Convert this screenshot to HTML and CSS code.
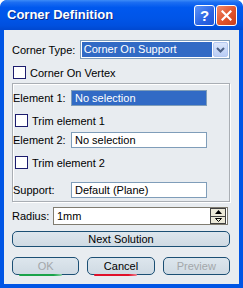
FILE: index.html
```html
<!DOCTYPE html>
<html lang="en">
<head>
  <meta charset="UTF-8">
  <title>Corner Definition</title>
  <link rel="stylesheet" href="styles.css">
</head>
<body>

<!-- JANELA -->
<div class="window">
  <div class="titlebar">
    <span class="title">Corner Definition</span>
    <span class="tbtn help">?</span>
    <span class="tbtn close">
      <svg width="11" height="11" viewBox="0 0 11 11"><path d="M1.5 1.5 L9.5 9.5 M9.5 1.5 L1.5 9.5" stroke="#fff" stroke-width="2.2" stroke-linecap="square"/></svg>
    </span>
  </div>

  <div class="dialog">
    <div class="row type-row">
      <span class="lbl">Corner Type:</span>
      <div class="combo">
        <span class="combo-text">Corner On Support</span>
        <span class="combo-btn">
          <svg width="9" height="6" viewBox="0 0 9 6"><path d="M1 1 L4.5 4.5 L8 1" fill="none" stroke="#4d6185" stroke-width="2"/></svg>
        </span>
      </div>
    </div>

    <div class="check vertex"><span class="box"></span>Corner On Vertex</div>

    <!-- GRUPO -->
    <div class="group">
      <div class="row el-row first">
        <span class="lbl">Element 1:</span>
        <span class="field selected">No selection</span>
      </div>
      <div class="check trim"><span class="box"></span>Trim element 1</div>
      <div class="row el-row">
        <span class="lbl">Element 2:</span>
        <span class="field">No selection</span>
      </div>
      <div class="check trim"><span class="box"></span>Trim element 2</div>
      <div class="row el-row support">
        <span class="lbl">Support:</span>
        <span class="field">Default (Plane)</span>
      </div>
    </div>

    <div class="row radius-row">
      <span class="lbl">Radius:</span>
      <div class="field spin-field">
        <span class="spin-text">1mm</span>
        <span class="spinner">
          <span class="spin up"><svg width="7" height="4" viewBox="0 0 7 4"><path d="M0 4 L3.5 0 L7 4 Z" fill="#000"/></svg></span>
          <span class="spin down"><svg width="7" height="4" viewBox="0 0 7 4"><path d="M0.5 0.5 L3.5 3.5 L6.5 0.5 Z" fill="none" stroke="#000" stroke-width="1"/></svg></span>
        </span>
      </div>
    </div>

    <button class="btn wide">Next Solution</button>

    <div class="actions">
      <button class="btn ok" disabled>OK<span class="bar green"></span></button>
      <button class="btn cancel">Cancel<span class="bar red"></span></button>
      <button class="btn" disabled>Preview</button>
    </div>
  </div>
</div>

</body>
</html>
```

FILE: styles.css
```css
body {
  margin: 0;
  font-family: "Liberation Sans", Arial, sans-serif;
  font-size: 11px;
  color: #000;
  background: #fff;
}

.window {
  width: 243px;
  height: 288px;
  box-sizing: border-box;
  background: #0055e5;
  border-radius: 7px 7px 0 0;
  padding: 0 4px 4px 4px;
  display: flex;
  flex-direction: column;
  overflow: hidden;
}

.titlebar {
  height: 30px;
  margin: 0 -4px;
  padding: 0 6px 0 7px;
  display: flex;
  align-items: center;
  gap: 1px;
  border-radius: 7px 7px 0 0;
  background: linear-gradient(#3d8cf7 0%, #1c6ef2 8%, #0058ee 25%, #0055e8 60%, #0050df 85%, #0048d0 100%);
}

.title {
  flex: 1;
  color: #fff;
  font-weight: bold;
  font-size: 13px;
  text-shadow: 1px 1px 0 #0a2a8a;
  padding-bottom: 1px;
}

.tbtn {
  width: 19px;
  height: 19px;
  border: 1px solid #fff;
  border-radius: 3px;
  display: flex;
  align-items: center;
  justify-content: center;
  color: #fff;
}

.help {
  background: linear-gradient(135deg, #5e94f8, #2a63e3 60%, #1d55d8);
  font-weight: bold;
  font-size: 15px;
}

.close {
  background: linear-gradient(135deg, #f08a6a, #e0532c 55%, #c9401c);
}

.dialog {
  flex: 1;
  background: #e8ecf0;
  padding: 10px 9px 0 8px;
  display: flex;
  flex-direction: column;
}

.row {
  display: flex;
  align-items: center;
}

.type-row {
  height: 19px;
}

.type-row .lbl {
  width: 68px;
}

.combo {
  width: 147px;
  height: 17px;
  border: 1px solid #7f9db9;
  background: #fff;
  display: flex;
  align-items: center;
  padding: 0 1px 0 1px;
}

.combo-text {
  flex: 1;
  height: 15px;
  line-height: 15px;
  background: #316ac5;
  color: #fff;
  padding-left: 2px;
}

.combo-btn {
  width: 15px;
  height: 15px;
  margin-left: 1px;
  background: linear-gradient(#dbe6fb, #b9cdf5);
  border: 1px solid #b4c8f0;
  box-sizing: border-box;
  border-radius: 2px;
  display: flex;
  align-items: center;
  justify-content: center;
}

.check {
  display: flex;
  align-items: center;
  gap: 4px;
  height: 13px;
}

.box {
  width: 11px;
  height: 11px;
  border: 1px solid #1c1c6e;
  background: #fff;
}

.vertex {
  margin: 7px 0 0 1px;
}

.group {
  margin-top: 4px;
  height: 119px;
  box-sizing: border-box;
  border: 1px solid #a9aeb4;
  box-shadow: inset 1px 1px 0 #fff, 1px 1px 0 #fff;
  display: flex;
  flex-direction: column;
}

.el-row {
  height: 16px;
}

.el-row.first {
  margin-top: 6px;
}

.el-row .lbl {
  width: 58px;
}

.field {
  width: 131px;
  height: 14px;
  line-height: 14px;
  border: 1px solid #7f9db9;
  background: #fff;
  padding-left: 3px;
}

.field.selected {
  background: #316ac5;
  color: #fff;
}

.group .check.trim {
  margin: 8px 0 5px 2px;
}

.group .el-row.support {
  margin-top: 8px;
}

.radius-row {
  margin-top: 5px;
  height: 18px;
}

.radius-row .lbl {
  width: 41px;
}

.spin-field {
  width: 169px;
  height: 16px;
  padding: 0 1px 0 3px;
  display: flex;
  align-items: center;
  border-color: #807c70;
}

.spin-text {
  flex: 1;
}

.spinner {
  width: 16px;
  height: 16px;
  display: flex;
  flex-direction: column;
}

.spin {
  flex: 1;
  background: #ece9d8;
  border: 1px solid #404040;
  box-sizing: border-box;
  display: flex;
  align-items: center;
  justify-content: center;
}

.spin.down {
  border-top: none;
}

.btn {
  font-family: "Liberation Sans", Arial, sans-serif;
  font-size: 11px;
  color: #000;
  height: 16px;
  padding: 0;
  border: 1px solid #1b4f74;
  border-radius: 5px;
  background: linear-gradient(#dde6ed, #cfdae3);
  position: relative;
}

.btn:disabled {
  color: #a3a7aa;
}

.wide {
  margin-top: 6px;
  width: 218px;
  line-height: 14px;
}

.actions {
  margin-top: 10px;
  display: flex;
  gap: 8px;
}

.actions .btn {
  width: 68px;
  height: 18px;
}

.bar {
  position: absolute;
  left: 6px;
  bottom: -2px;
  width: 43px;
  height: 2px;
  border-radius: 1px;
}

.green {
  background: linear-gradient(90deg, #1aa34a, #1aa34a 80%, #8fd3a8);
}

.red {
  background: linear-gradient(90deg, #e0102a, #e0102a 80%, #f08894);
}
```
